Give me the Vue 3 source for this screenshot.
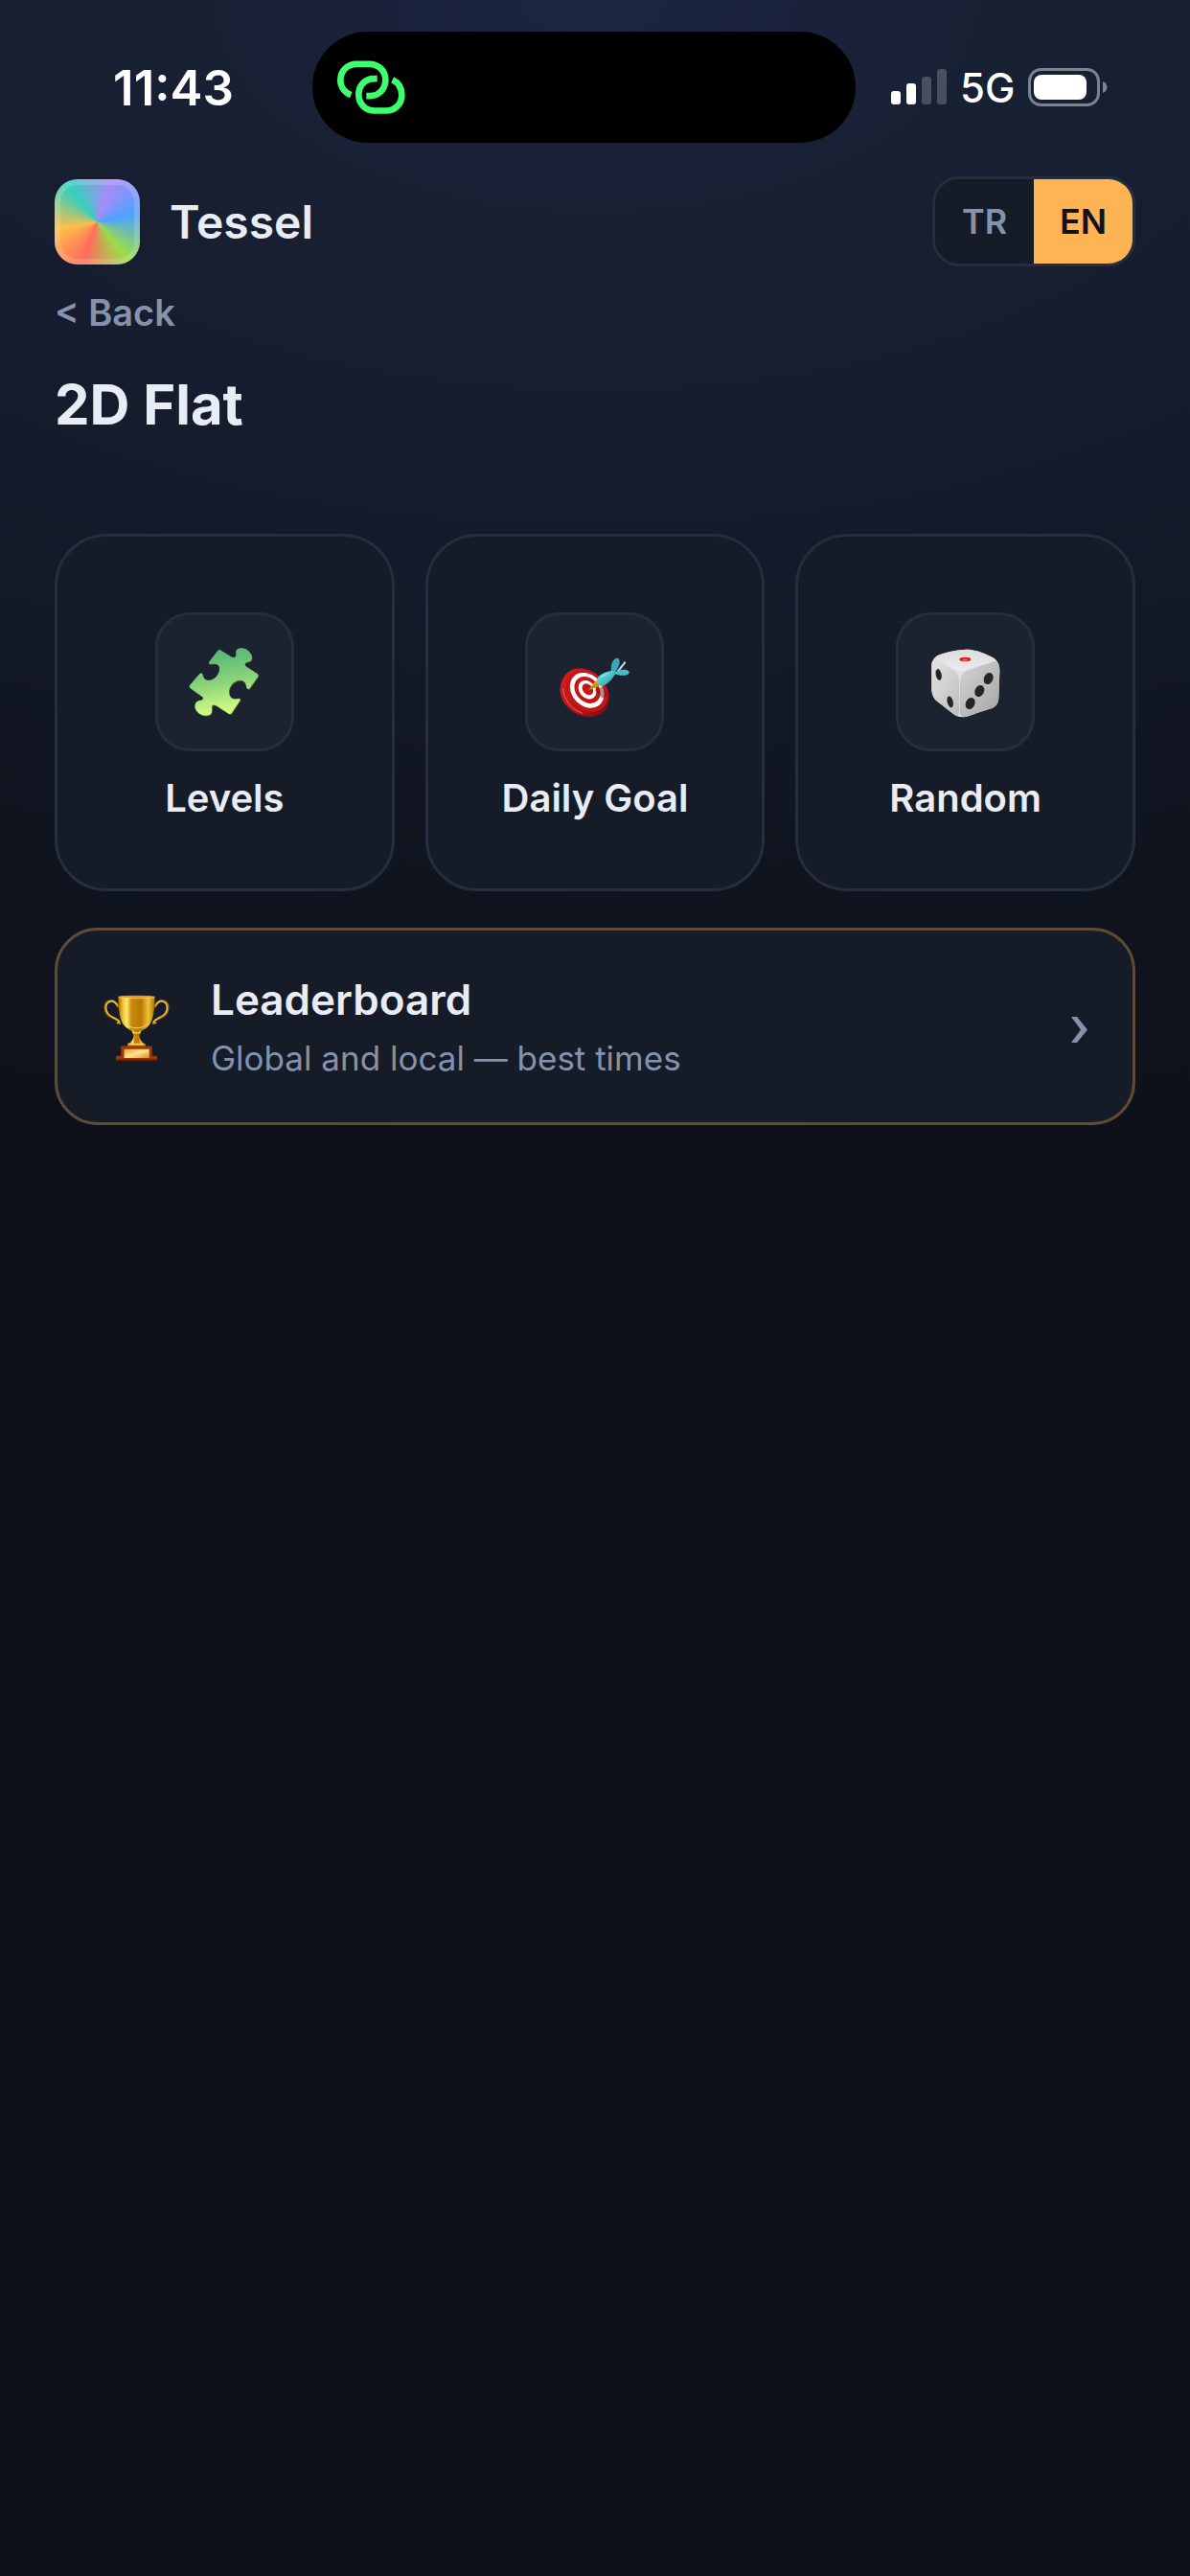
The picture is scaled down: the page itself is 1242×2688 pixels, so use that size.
<script setup>
import { ref } from 'vue'

const language = ref('EN')
const languages = ['TR', 'EN']

const modes = [
  { id: 'levels', label: 'Levels' },
  { id: 'daily', label: 'Daily Goal' },
  { id: 'random', label: 'Random' },
]
</script>

<template>
  <div class="screen">
    <div class="status-bar">
      <span class="time">11:43</span>
      <div class="island">
        <svg class="link-icon" viewBox="97 70 213 167" fill="none" stroke="#3dff6e" stroke-width="20" aria-hidden="true">
          <path d="M140 178C119 170 107 151 107 131C107 102 129 81 157 81H197C226 81 248 102 248 130C248 159 227 181 199 181H188" />
          <path d="M222 127H212C184 127 164 148 164 177C164 206 186 227 214 227H250C278 227 299 206 299 178C299 156 288 139 270 130" />
        </svg>
      </div>
      <div class="signals">
        <svg class="bars" viewBox="0 0 58 38" aria-hidden="true">
          <rect x="0" y="23" width="10" height="14" rx="3" fill="#fff" />
          <rect x="16" y="15" width="10" height="22" rx="3" fill="#fff" />
          <rect x="32" y="8" width="10" height="29" rx="3" fill="#4a4f60" />
          <rect x="48" y="0" width="10" height="37" rx="3" fill="#4a4f60" />
        </svg>
        <span class="network">5G</span>
        <svg class="battery" viewBox="0 0 84 40" aria-hidden="true">
          <rect x="1.5" y="1.5" width="72" height="37" rx="12" fill="none" stroke="#7d8290" stroke-width="3" />
          <rect x="6" y="7" width="55" height="26" rx="8" fill="#fff" />
          <path d="M78 14C84 16 84 24 78 26Z" fill="#7d8290" />
        </svg>
      </div>
    </div>

    <header class="top-bar">
      <div class="brand">
        <span class="logo"></span>
        <span class="brand-name">Tessel</span>
      </div>
      <div class="lang-switch">
        <button
          v-for="lang in languages"
          :key="lang"
          class="lang-btn"
          :class="{ active: language === lang }"
          :aria-pressed="language === lang"
          @click="language = lang"
        >{{ lang }}</button>
      </div>
    </header>

    <main class="content">
      <a href="#" class="back-link">&lt; Back</a>
      <h1 class="page-title">2D Flat</h1>

      <div class="mode-grid">
        <button v-for="mode in modes" :key="mode.id" class="mode-card">
          <span class="mode-icon">
            <svg v-if="mode.id === 'levels'" viewBox="131 124 240 240" aria-hidden="true">
              <defs>
                <linearGradient id="piece" x1="0.4" y1="0" x2="0.6" y2="1">
                  <stop offset="0" stop-color="#4fb477" />
                  <stop offset="0.5" stop-color="#8ad47a" />
                  <stop offset="0.85" stop-color="#c9f582" />
                  <stop offset="1" stop-color="#d8fa86" />
                </linearGradient>
              </defs>
              <g stroke-linejoin="round">
                <path transform="translate(2 3)" fill="#4a4a1e" d="M232 144Q236 141 240 144L270 163Q282 171 287 163Q290 158 288 150C288 137 308 134 321 142C339 153 343 174 329 179C318 181 309 185 320 195L355 218Q359 222 356 227L331 262Q327 268 322 262C319 250 319 242 306 238C285 234 264 256 266 277C268 293 278 298 292 296Q303 293 301 300L275 339Q271 345 265 342L226 317Q213 311 212 321C213 332 214 343 202 347C184 352 163 340 160 323C158 306 168 301 180 300Q188 298 184 290L144 261Q141 257 144 253L174 218Q180 213 183 219C185 232 193 240 207 238C227 234 240 212 236 195C232 186 224 184 213 186Q202 188 204 181Z" />
                <path fill="url(#piece)" stroke="#a6e58a" stroke-width="1" d="M232 144Q236 141 240 144L270 163Q282 171 287 163Q290 158 288 150C288 137 308 134 321 142C339 153 343 174 329 179C318 181 309 185 320 195L355 218Q359 222 356 227L331 262Q327 268 322 262C319 250 319 242 306 238C285 234 264 256 266 277C268 293 278 298 292 296Q303 293 301 300L275 339Q271 345 265 342L226 317Q213 311 212 321C213 332 214 343 202 347C184 352 163 340 160 323C158 306 168 301 180 300Q188 298 184 290L144 261Q141 257 144 253L174 218Q180 213 183 219C185 232 193 240 207 238C227 234 240 212 236 195C232 186 224 184 213 186Q202 188 204 181Z" />
              </g>
            </svg>

            <svg v-else-if="mode.id === 'daily'" viewBox="121 124 240 240" aria-hidden="true">
              <defs>
                <linearGradient id="rim" x1="0" y1="0" x2="1" y2="1">
                  <stop offset="0" stop-color="#d81f20" />
                  <stop offset="0.6" stop-color="#b81518" />
                  <stop offset="1" stop-color="#6d0d10" />
                </linearGradient>
                <linearGradient id="dart" x1="0" y1="0" x2="1" y2="1">
                  <stop offset="0.2" stop-color="#66dde5" />
                  <stop offset="1" stop-color="#288f9c" />
                </linearGradient>
              </defs>
              <path fill="url(#rim)" d="M160 210C182 194 220 199 249 222C278 245 292 282 282 311C278 332 262 343 246 348C222 358 185 350 160 326C136 304 127 275 134 250C138 232 148 218 160 210Z" />
              <path fill="none" stroke="#e8686a" stroke-width="3" d="M141 263C142 297 169 331 202 341" />
              <ellipse cx="216" cy="270" rx="58" ry="73" transform="rotate(-41 216 270)" fill="#c41519" />
              <ellipse cx="216" cy="269" rx="48" ry="60" transform="rotate(-41 216 269)" fill="#fff" />
              <ellipse cx="217" cy="268" rx="36" ry="46" transform="rotate(-41 217 268)" fill="#c41519" />
              <ellipse cx="217" cy="267" rx="25" ry="32" transform="rotate(-41 217 267)" fill="#fff" />
              <ellipse cx="218" cy="266" rx="15" ry="20" transform="rotate(-41 218 266)" fill="#c41519" />
              <path fill="#7e1518" opacity="0.5" d="M240 268L265 256L282 284L264 294Z" />
              <path fill="#d9a514" d="M219 270L241 241L247 237L257 255L246 258Z" />
              <path stroke="#7c4c09" stroke-width="2" d="M220 269L247 250" />
              <path fill="#c5d8dd" d="M310 207L334 178Q339 179 337 184L315 212Z" />
              <path fill="#39a9b5" d="M292 209C288 188 298 168 311 168C320 170 319 183 315 193L303 216Z" />
              <path fill="#43bdc8" d="M300 215C313 203 339 201 348 210C350 220 336 224 320 222L301 218Z" />
              <path fill="url(#dart)" d="M247 233C255 219 273 211 295 207L307 213C297 232 282 249 263 256C254 257 246 245 247 233Z" />
              <path stroke="#b3f6f7" stroke-width="3" opacity="0.8" d="M259 227L282 216" />
            </svg>

            <svg v-else viewBox="141 124 240 240" aria-hidden="true">
              <defs>
                <linearGradient id="dice-left" x1="0" y1="0" x2="1" y2="1">
                  <stop offset="0" stop-color="#e2e2e3" />
                  <stop offset="1" stop-color="#bdbebe" />
                </linearGradient>
                <linearGradient id="dice-right" x1="0" y1="0" x2="1" y2="1">
                  <stop offset="0" stop-color="#d2d3d3" />
                  <stop offset="1" stop-color="#a5a6a6" />
                </linearGradient>
                <linearGradient id="dice-top" x1="0" y1="0" x2="0" y2="1">
                  <stop offset="0" stop-color="#dcdcdd" />
                  <stop offset="1" stop-color="#ececed" />
                </linearGradient>
              </defs>
              <path fill="#e0e0e1" d="M179 157C205 147 237 142 263 141C287 141 323 153 346 167C361 175 367 190 367 207L364 291C364 307 356 319 345 324L264 351C249 355 236 352 226 346L173 305C160 295 154 280 154 264V191C155 173 164 163 179 157Z" />
              <path fill="url(#dice-left)" d="M154 190C154 176 163 170 174 177L224 207C236 214 240 226 240 240V336C240 352 232 351 226 346L173 305C160 295 154 280 154 264Z" />
              <path fill="url(#dice-right)" d="M243 240C243 223 252 212 268 207L342 180C357 174 367 182 367 207L364 291C364 307 356 319 345 324L264 351C250 354 242 350 242 334Z" />
              <path fill="url(#dice-top)" d="M177 159C205 147 237 142 263 141C287 141 323 153 346 167C355 173 349 177 340 180L265 204C249 210 235 210 222 203L175 175C166 169 166 163 177 159Z" />
              <ellipse cx="259" cy="172" rx="18" ry="7" fill="#e01b22" />
              <ellipse cx="259" cy="174" rx="9" ry="3" fill="#ff6d6b" />
              <g fill="#242626">
                <ellipse cx="176" cy="220" rx="9" ry="18" transform="rotate(-12 176 220)" />
                <ellipse cx="212" cy="305" rx="9" ry="18" transform="rotate(-14 212 305)" />
                <ellipse cx="332" cy="232" rx="14" ry="19" transform="rotate(24 332 232)" />
                <ellipse cx="304" cy="271" rx="14" ry="19" transform="rotate(24 304 271)" />
                <ellipse cx="275" cy="310" rx="14" ry="19" transform="rotate(24 275 310)" />
              </g>
            </svg>
          </span>
          <span class="mode-label">{{ mode.label }}</span>
        </button>
      </div>

      <button class="leaderboard">
        <svg class="trophy" viewBox="50 75 220 220" aria-hidden="true">
          <defs>
            <linearGradient id="cup" x1="0" y1="0" x2="1" y2="0">
              <stop offset="0" stop-color="#a76b05" />
              <stop offset="0.14" stop-color="#f5c736" />
              <stop offset="0.24" stop-color="#ffe873" />
              <stop offset="0.36" stop-color="#c98a0b" />
              <stop offset="0.62" stop-color="#b97805" />
              <stop offset="0.82" stop-color="#f3c238" />
              <stop offset="1" stop-color="#a66a04" />
            </linearGradient>
            <linearGradient id="plate" x1="0" y1="0" x2="1" y2="1">
              <stop offset="0" stop-color="#e1a541" />
              <stop offset="0.5" stop-color="#ffe58a" />
              <stop offset="1" stop-color="#cf8e31" />
            </linearGradient>
          </defs>
          <g fill="none" stroke-linecap="round" stroke-linejoin="round">
            <path stroke="#a66d0a" stroke-width="8" d="M101 120C96 107 84 100 73 105C58 111 59 132 68 144C80 160 105 158 107 174" />
            <path stroke="#edc44a" stroke-width="4" d="M99 117C93 107 84 102 74 106C61 112 62 132 70 143C82 158 103 158 106 170L99 173" />
            <path stroke="#a66d0a" stroke-width="8" d="M219 120C224 107 236 100 247 105C262 111 261 132 252 144C240 160 215 158 213 174" />
            <path stroke="#edc44a" stroke-width="4" d="M221 117C227 107 236 102 246 106C259 112 258 132 250 143C238 158 217 158 214 170L221 173" />
          </g>
          <path fill="url(#cup)" d="M102 90H218C216 120 217 151 203 175C194 189 180 194 174 200H147C139 193 126 189 117 175C103 151 104 120 102 90Z" />
          <ellipse cx="160" cy="90" rx="58" ry="4" fill="#d99e22" />
          <path fill="none" stroke="#ffe27a" stroke-width="2" d="M104 93Q160 98 216 93" />
          <path fill="none" stroke="#ffda61" stroke-width="3" d="M126 176C143 193 177 193 194 176" />
          <path fill="url(#cup)" d="M145 197H175L169 209C168 220 173 229 183 238H137C147 229 152 220 151 209Z" />
          <path fill="#d79c1d" d="M132 246V238C137 232 147 235 151 240C157 235 164 235 169 240C175 234 183 233 188 240V246Z" />
          <path fill="none" stroke="#ffe685" stroke-width="3" d="M147 204H173M139 239H181" />
          <path fill="#98380b" d="M111 245H209V276H222Q225 277 225 282V292H95V282Q96 276 100 276H111Z" />
          <path fill="#641d03" d="M96 287H225V292H96Z" />
          <path fill="url(#plate)" d="M121 255H200V283H121Z" />
        </svg>
        <span class="leaderboard-text">
          <span class="leaderboard-title">Leaderboard</span>
          <span class="leaderboard-sub">Global and local — best times</span>
        </span>
        <svg class="chevron" viewBox="0 0 18 33" aria-hidden="true">
          <path fill="#8492ab" d="M0 6H6L17 19.500L6 33H0L10 19.500Z" />
        </svg>
      </button>
    </main>
  </div>
</template>

<style>
body {
  margin: 0;
  background: #0e1019;
}
</style>

<style scoped>
* { box-sizing: border-box; }

.screen {
  min-height: 100vh;
  background: radial-gradient(180% 1240px at 50% 0, #1b2540, #182033 20%, #151b2b 45%, #10141f 75%, #0e1019 100%);
  font-family: Inter, 'Noto Sans', sans-serif;
  color: #e8ecf5;
}

button {
  font-family: inherit;
  color: inherit;
  cursor: pointer;
}

/* STATUS BAR */
.status-bar {
  display: grid;
  grid-template-columns: 326fr 567fr 349fr;
  align-items: center;
  padding: 33px 0 35px;
  color: #fff;
}
.time {
  padding-left: 36px;
  text-align: center;
  font-size: 51px;
  font-weight: 600;
}
.island {
  display: flex;
  align-items: center;
  height: 116px;
  padding-left: 26px;
  border-radius: 58px;
  background: #000;
}
.link-icon { width: 71px; height: 56px; }
.signals {
  display: flex;
  align-items: center;
  gap: 14px;
  padding-left: 37px;
}
.bars { width: 58px; height: 38px; }
.network { font-size: 42px; font-weight: 500; }
.battery { width: 84px; height: 40px; }

/* HEADER */
.top-bar {
  display: flex;
  justify-content: space-between;
  align-items: center;
  padding: 0 57px;
}
.brand {
  display: flex;
  align-items: center;
  gap: 31px;
}
.logo {
  width: 89px;
  height: 89px;
  border-radius: 24px;
  background: conic-gradient(from 200deg, #ff6b5e, #fdbe4a, #35d0ba, #a78bfa, #4da3ff, #9bdc4a, #ff6b5e);
  box-shadow: inset 0 0 0 6px rgba(255, 255, 255, 0.16);
}
.brand-name { font-size: 48px; font-weight: 600; }
.lang-switch {
  display: flex;
  height: 94px;
  border: 3px solid #242e3f;
  border-radius: 28px;
  background: #161c27;
  overflow: hidden;
}
.lang-btn {
  width: 103px;
  padding: 0;
  border: none;
  background: transparent;
  color: #8492ab;
  font-size: 36px;
  font-weight: 600;
}
.lang-btn.active {
  background: #ffb454;
  color: #10131c;
}

/* CONTENT */
.content {
  display: flex;
  flex-direction: column;
  align-items: stretch;
  padding: 24px 57px;
}
.back-link {
  align-self: flex-start;
  color: #8492ab;
  font-size: 38px;
  font-weight: 600;
  line-height: 48px;
  text-decoration: none;
}
.page-title {
  margin: 36px 0 99px;
  font-size: 58px;
  font-weight: 700;
  line-height: 72px;
}

/* MODES */
.mode-grid {
  display: grid;
  grid-template-columns: repeat(3, 1fr);
  gap: 32px;
}
.mode-card {
  display: flex;
  flex-direction: column;
  align-items: center;
  gap: 24px;
  padding: 79px 16px 69px;
  border: 3px solid #242e3f;
  border-radius: 54px;
  background: #161c27;
}
.mode-icon {
  display: flex;
  align-items: center;
  justify-content: center;
  width: 145px;
  height: 145px;
  border: 3px solid #242e3f;
  border-radius: 36px;
  background: #1b2330;
}
.mode-icon svg { width: 80px; height: 80px; }
.mode-label {
  font-size: 40px;
  font-weight: 600;
  line-height: 50px;
}

/* LEADERBOARD */
.leaderboard {
  display: flex;
  align-items: center;
  gap: 41px;
  margin-top: 38px;
  padding: 44px 46px;
  border: 3px solid #5f4b35;
  border-radius: 45px;
  background: #161c27;
  text-align: left;
}
.trophy { flex-shrink: 0; width: 73px; height: 73px; }
.leaderboard-text {
  display: flex;
  flex: 1;
  flex-direction: column;
  gap: 10px;
}
.leaderboard-title {
  font-size: 44px;
  font-weight: 600;
  line-height: 56px;
}
.leaderboard-sub {
  color: #8492ab;
  font-size: 35px;
  line-height: 46px;
}
.chevron { flex-shrink: 0; width: 18px; height: 33px; }
</style>
